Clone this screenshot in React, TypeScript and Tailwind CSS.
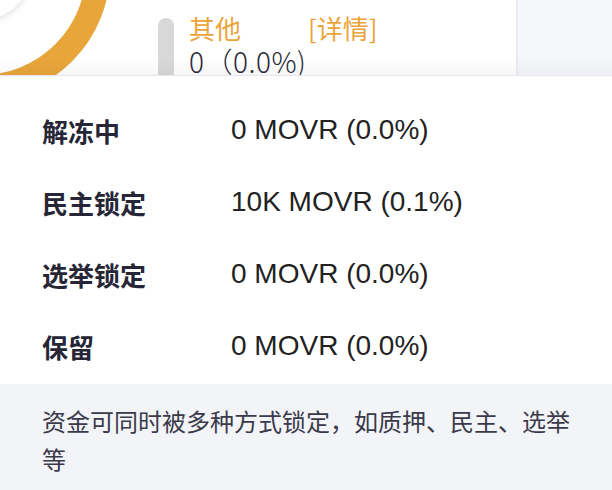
import React from "react";

const cjk = { fontFamily: '"Noto Sans CJK SC", "Noto Sans", sans-serif' };
const latin = { fontFamily: '"Liberation Sans", "Noto Sans CJK SC", sans-serif' };

const rows = [
  { label: "解冻中", value: "0 MOVR (0.0%)" },
  { label: "民主锁定", value: "10K MOVR (0.1%)" },
  { label: "选举锁定", value: "0 MOVR (0.0%)" },
  { label: "保留", value: "0 MOVR (0.0%)" },
];

export default function App() {
  return (
    <div className="w-[612px] h-[490px] overflow-hidden bg-white" style={cjk}>
      {/* background content (chart card) */}
      <div className="flex h-[75px] overflow-hidden bg-[#f6f7fa]">
        <div className="relative w-[518px] shrink-0 bg-white border-r-2 border-[#e7e9f0]">
          <svg
            className="absolute left-0 top-0"
            width="140"
            height="75"
            viewBox="0 0 140 75"
          >
            <defs>
              <filter id="sh" x="-50%" y="-50%" width="200%" height="200%">
                <feDropShadow dx="0" dy="2" stdDeviation="3" floodColor="#000" floodOpacity="0.13" />
              </filter>
            </defs>
            <circle cx="-19" cy="-30" r="117" fill="none" stroke="#e8a53a" strokeWidth="24" />
            <circle cx="-19" cy="-30" r="50" fill="#fff" filter="url(#sh)" />
          </svg>
          <div className="flex pl-[158px] pt-[18px] gap-[15px]">
            <div className="w-4 h-[80px] rounded-full bg-[#d8d8d8] shrink-0" />
            <div className="flex flex-col -mt-[6px]">
              <div className="flex text-[26px] leading-[32px] text-[#eba43a]">
                <span className="w-[119px]">其他</span>
                <span>[详情]</span>
              </div>
              <div className="text-[28px] leading-[34px] text-[#2b2b3b] font-light tracking-[0.5px]">
                0（0.0%)
              </div>
            </div>
          </div>
          <div className="absolute left-0 right-0 bottom-0 h-[16px] bg-gradient-to-b from-transparent to-[rgba(0,0,20,0.035)]" />
        </div>
        <div className="flex-1 bg-gradient-to-b from-[#f6f7fa] from-75% to-[#eeeff3]" />
      </div>

      {/* popup sheet */}
      <div className="relative z-10 bg-white border-t border-[#e6e6ee]">
        <div className="pt-[18px] pb-[2px] px-[42px]">
          {rows.map((r) => (
            <div key={r.label} className="flex items-center h-[72px]">
              <div className="w-[189px] shrink-0 text-[26px] font-bold text-[#262636]">{r.label}</div>
              <div className="text-[28px] text-[#222222]" style={latin}>
                {r.value}
              </div>
            </div>
          ))}
        </div>
        <div className="bg-[#f3f4f8] pl-[42px] pr-[36px] pt-[18px] pb-[12px] text-[24px] leading-[38px] text-[#3a3a4a]">
          资金可同时被多种方式锁定，如质押、民主、选举等
        </div>
      </div>
    </div>
  );
}
